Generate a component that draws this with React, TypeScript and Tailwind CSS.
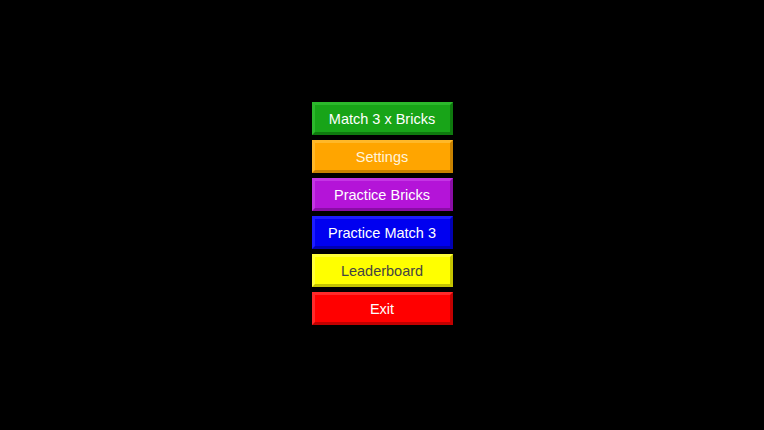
const buttons = [
    { label: "Match 3 x Bricks", cls: "bg-[#18a418] border-t-[#2cb82c] border-l-[#2cb82c] border-r-[#0e7a0e] border-b-[#0e7a0e] text-white" },
    { label: "Settings", cls: "bg-[#ffa500] border-t-[#ffb829] border-l-[#ffb829] border-r-[#c98200] border-b-[#c98200] text-[#fff4dc]" },
    { label: "Practice Bricks", cls: "bg-[#b414d8] border-t-[#c435e4] border-l-[#c435e4] border-r-[#8a0ca6] border-b-[#8a0ca6] text-white" },
    { label: "Practice Match 3", cls: "bg-[#0000f0] border-t-[#1d1dff] border-l-[#1d1dff] border-r-[#0000b4] border-b-[#0000b4] text-white" },
    { label: "Leaderboard", cls: "bg-[#ffff00] border-t-[#ffff3a] border-l-[#ffff3a] border-r-[#c4c400] border-b-[#c4c400] text-[#444]" },
    { label: "Exit", cls: "bg-[#ff0000] border-t-[#ff2a2a] border-l-[#ff2a2a] border-r-[#c20000] border-b-[#c20000] text-white" },
]

export default function App() {
    return (
        <div className="flex h-[430px] w-[764px] items-center justify-center bg-black pb-[3px] font-['Liberation_Sans',Arial,sans-serif]">
            <div className="flex flex-col gap-[5px]">
                {buttons.map((b) => (
                    <button
                        key={b.label}
                        className={`flex h-[33px] w-[141px] items-center justify-center border-[3px] pt-[3px] text-[14.5px] ${b.cls}`}
                    >
                        {b.label}
                    </button>
                ))}
            </div>
        </div>
    )
}
